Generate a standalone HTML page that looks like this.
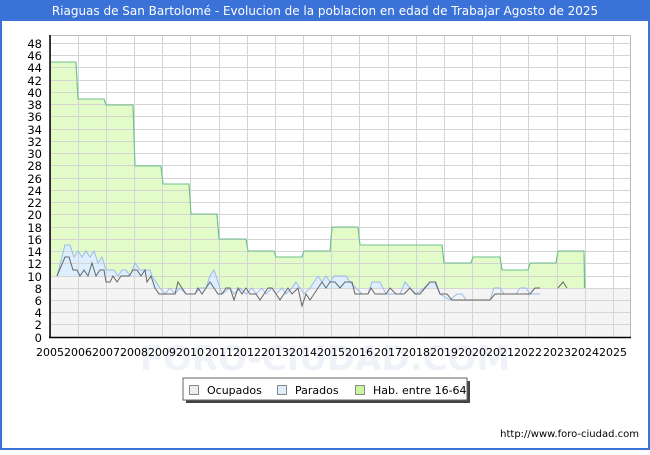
<!DOCTYPE html>
<html><head><meta charset="utf-8"><style>
html,body{margin:0;padding:0;background:#fff;}
body{width:650px;height:450px;overflow:hidden;font-family:"Liberation Sans","DejaVu Sans",sans-serif;}
</style></head><body>
<svg width="650" height="450" xmlns="http://www.w3.org/2000/svg" font-family="DejaVu Sans, Liberation Sans, sans-serif">
<rect x="0" y="0" width="650" height="450" fill="#fff"/>
<rect x="0" y="0" width="650" height="21" fill="#3a72d8"/>
<rect x="0" y="0" width="2" height="450" fill="#3a72d8"/>
<rect x="648" y="0" width="2" height="450" fill="#3a72d8"/>
<rect x="0" y="448" width="650" height="2" fill="#3a72d8"/>
<text x="325" y="15" font-size="12" fill="#fff" text-anchor="middle">Riaguas de San Bartolomé - Evolucion de la poblacion en edad de Trabajar Agosto de 2025</text>

<text x="325" y="370" font-size="34" fill="#f0f2f9" text-anchor="middle" font-weight="bold">FORO-CIUDAD.COM</text>

<path d="M50,337 L50,62 L76,62 L78,99 L104,99 L106,105 L133,105 L135,166 L161,166 L163,184 L189,184 L191,214 L217,214 L219,239 L246,239 L248,251 L274,251 L276,257 L302,257 L304,251 L330,251 L332,227 L358,227 L360,245 L442,245 L444,263 L471,263 L473,257 L500,257 L502,270 L528,270 L530,263 L556,263 L558,251 L584,251 L585,337 Z" fill="#e2fbc8" stroke="#6cc08a" stroke-width="1"/>
<path d="M57,337 L57,276 L65,245 L70,245 L74,257 L78,251 L82,257 L86,251 L90,257 L94,251 L98,263 L102,257 L106,270 L110,270 L114,270 L118,276 L122,270 L126,270 L130,276 L135,263 L140,270 L145,270 L150,270 L152,276 L156,282 L160,288 L165,294 L170,288 L175,294 L180,288 L186,294 L195,294 L200,288 L206,288 L210,276 L214,270 L218,282 L222,294 L230,288 L234,294 L240,288 L246,294 L252,288 L256,294 L262,288 L266,294 L272,288 L276,294 L282,288 L286,294 L292,288 L296,282 L300,288 L304,294 L310,288 L314,282 L318,276 L322,282 L326,276 L330,282 L334,276 L340,276 L346,276 L350,282 L356,288 L362,294 L368,294 L372,282 L380,282 L386,294 L392,294 L400,294 L405,282 L410,288 L416,294 L424,288 L430,282 L436,282 L440,294 L450,300 L457,294 L462,294 L466,300 L490,300 L494,288 L500,288 L504,294 L516,294 L520,288 L526,288 L530,294 L540,294 L540,337 Z" fill="#ddeeff" stroke="none"/>
<path d="M50,337 L50,276 L150,276 L152,288 L630,288 L630,337 Z" fill="#f4f4f4"/>
<g stroke="#d4d4d4" stroke-width="1">
<line x1="50" x2="630" y1="312.5" y2="312.5"/><line x1="50" x2="630" y1="300.5" y2="300.5"/><line x1="50" x2="630" y1="288.5" y2="288.5"/><line x1="50" x2="630" y1="276.5" y2="276.5"/><line x1="50" x2="630" y1="263.5" y2="263.5"/><line x1="50" x2="630" y1="251.5" y2="251.5"/><line x1="50" x2="630" y1="239.5" y2="239.5"/><line x1="50" x2="630" y1="227.5" y2="227.5"/><line x1="50" x2="630" y1="214.5" y2="214.5"/><line x1="50" x2="630" y1="202.5" y2="202.5"/><line x1="50" x2="630" y1="190.5" y2="190.5"/><line x1="50" x2="630" y1="178.5" y2="178.5"/><line x1="50" x2="630" y1="165.5" y2="165.5"/><line x1="50" x2="630" y1="153.5" y2="153.5"/><line x1="50" x2="630" y1="141.5" y2="141.5"/><line x1="50" x2="630" y1="129.5" y2="129.5"/><line x1="50" x2="630" y1="116.5" y2="116.5"/><line x1="50" x2="630" y1="104.5" y2="104.5"/><line x1="50" x2="630" y1="92.5" y2="92.5"/><line x1="50" x2="630" y1="80.5" y2="80.5"/><line x1="50" x2="630" y1="67.5" y2="67.5"/><line x1="50" x2="630" y1="55.5" y2="55.5"/><line x1="50" x2="630" y1="43.5" y2="43.5"/><line x1="50" x2="630" y1="324.5" y2="324.5"/>
<line x1="78.5" x2="78.5" y1="35" y2="337"/><line x1="106.5" x2="106.5" y1="35" y2="337"/><line x1="134.5" x2="134.5" y1="35" y2="337"/><line x1="162.5" x2="162.5" y1="35" y2="337"/><line x1="190.5" x2="190.5" y1="35" y2="337"/><line x1="219.5" x2="219.5" y1="35" y2="337"/><line x1="247.5" x2="247.5" y1="35" y2="337"/><line x1="275.5" x2="275.5" y1="35" y2="337"/><line x1="303.5" x2="303.5" y1="35" y2="337"/><line x1="331.5" x2="331.5" y1="35" y2="337"/><line x1="359.5" x2="359.5" y1="35" y2="337"/><line x1="388.5" x2="388.5" y1="35" y2="337"/><line x1="416.5" x2="416.5" y1="35" y2="337"/><line x1="444.5" x2="444.5" y1="35" y2="337"/><line x1="472.5" x2="472.5" y1="35" y2="337"/><line x1="500.5" x2="500.5" y1="35" y2="337"/><line x1="528.5" x2="528.5" y1="35" y2="337"/><line x1="557.5" x2="557.5" y1="35" y2="337"/><line x1="585.5" x2="585.5" y1="35" y2="337"/><line x1="613.5" x2="613.5" y1="35" y2="337"/>
</g>
<path d="M50,62 L76,62 L78,99 L104,99 L106,105 L133,105 L135,166 L161,166 L163,184 L189,184 L191,214 L217,214 L219,239 L246,239 L248,251 L274,251 L276,257 L302,257 L304,251 L330,251 L332,227 L358,227 L360,245 L442,245 L444,263 L471,263 L473,257 L500,257 L502,270 L528,270 L530,263 L556,263 L558,251 L584,251 L585,288" fill="none" stroke="#6cc08a" stroke-width="1"/>
<polyline fill="none" stroke="#99bbee" stroke-width="1" points="57,276 65,245 70,245 74,257 78,251 82,257 86,251 90,257 94,251 98,263 102,257 106,270 110,270 114,270 118,276 122,270 126,270 130,276 135,263 140,270 145,270 150,270 152,276 156,282 160,288 165,294 170,288 175,294 180,288 186,294 195,294 200,288 206,288 210,276 214,270 218,282 222,294 230,288 234,294 240,288 246,294 252,288 256,294 262,288 266,294 272,288 276,294 282,288 286,294 292,288 296,282 300,288 304,294 310,288 314,282 318,276 322,282 326,276 330,282 334,276 340,276 346,276 350,282 356,288 362,294 368,294 372,282 380,282 386,294 392,294 400,294 405,282 410,288 416,294 424,288 430,282 436,282 440,294 450,300 457,294 462,294 466,300 490,300 494,288 500,288 504,294 516,294 520,288 526,288 530,294 540,294"/>
<polyline fill="none" stroke="#666" stroke-width="1" points="57,276 65,257 69,257 73,270 77,270 80,276 84,270 88,276 92,263 96,276 100,270 104,270 106,282 110,282 113,276 117,282 121,276 125,276 129,276 133,270 137,270 141,276 145,270 147,282 151,276 155,288 159,294 165,294 175,294 178,282 182,288 186,294 195,294 198,288 202,294 206,288 210,282 214,288 218,294 222,294 226,288 230,288 234,300 238,288 242,294 246,288 250,294 256,294 260,300 264,294 268,288 272,288 276,294 280,300 284,294 288,288 292,294 298,288 302,306 306,294 310,300 314,294 318,288 322,282 326,288 330,282 335,282 340,288 345,282 352,282 355,294 362,294 368,294 371,288 375,294 386,294 390,288 396,294 404,294 410,288 415,294 420,294 425,288 430,282 435,282 440,294 447,294 452,300 470,300 490,300 495,294 520,294 530,294 535,288 540,288"/>
<polyline fill="none" stroke="#666" stroke-width="1" points="558,288 563,282 567,288"/>
<rect x="50.5" y="35.5" width="580" height="302" fill="none" stroke="#bbb" stroke-width="1"/>
<line x1="50" y1="35" x2="50" y2="338" stroke="#000" stroke-width="1.5"/>
<line x1="49" y1="337.5" x2="631" y2="337.5" stroke="#000" stroke-width="1.5"/>
<g font-size="11.5" fill="#000" text-anchor="end">
<text x="42" y="342">0</text><text x="42" y="329">2</text><text x="42" y="317">4</text><text x="42" y="305">6</text><text x="42" y="293">8</text><text x="42" y="281">10</text><text x="42" y="268">12</text><text x="42" y="256">14</text><text x="42" y="244">16</text><text x="42" y="232">18</text><text x="42" y="219">20</text><text x="42" y="207">22</text><text x="42" y="195">24</text><text x="42" y="183">26</text><text x="42" y="170">28</text><text x="42" y="158">30</text><text x="42" y="146">32</text><text x="42" y="134">34</text><text x="42" y="121">36</text><text x="42" y="109">38</text><text x="42" y="97">40</text><text x="42" y="85">42</text><text x="42" y="72">44</text><text x="42" y="60">46</text><text x="42" y="48">48</text>
</g>
<g font-size="11" fill="#000" text-anchor="middle">
<text x="50" y="356">2005</text><text x="78" y="356">2006</text><text x="106" y="356">2007</text><text x="134" y="356">2008</text><text x="162" y="356">2009</text><text x="190" y="356">2010</text><text x="219" y="356">2011</text><text x="247" y="356">2012</text><text x="275" y="356">2013</text><text x="303" y="356">2014</text><text x="331" y="356">2015</text><text x="359" y="356">2016</text><text x="388" y="356">2017</text><text x="416" y="356">2018</text><text x="444" y="356">2019</text><text x="472" y="356">2020</text><text x="500" y="356">2021</text><text x="528" y="356">2022</text><text x="557" y="356">2023</text><text x="585" y="356">2024</text><text x="613" y="356">2025</text>
</g>
<rect x="186" y="381" width="284" height="22" fill="#444"/>
<rect x="183" y="378" width="284" height="22" fill="#fff" stroke="#666" stroke-width="1"/>
<rect x="189.5" y="385.5" width="9" height="9" fill="#eee" stroke="#888"/>
<text x="207" y="394" font-size="11">Ocupados</text>
<rect x="277.5" y="385.5" width="9" height="9" fill="#ddeeff" stroke="#888"/>
<text x="295" y="394" font-size="11">Parados</text>
<rect x="355.5" y="385.5" width="9" height="9" fill="#ccf5a0" stroke="#888"/>
<text x="373" y="394" font-size="11">Hab. entre 16-64</text>
<text x="639" y="437" font-size="10" text-anchor="end" fill="#000">http://www.foro-ciudad.com</text>
</svg>
</body></html>
